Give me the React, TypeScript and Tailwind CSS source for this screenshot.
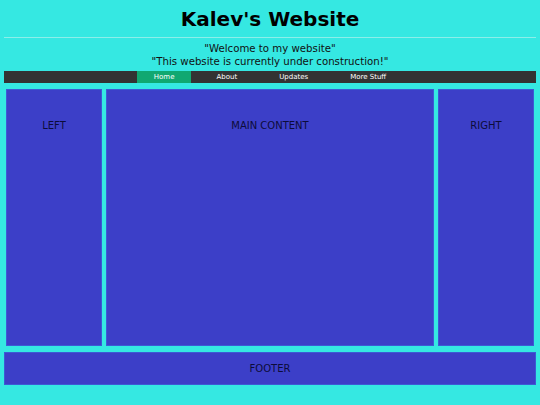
import React from 'react';

const navItems = ['Home', 'About', 'Updates', 'More Stuff'];

const App = () => {
  return (
    <div
      className="min-h-screen w-full bg-[#35e8e2] px-[4px] text-black"
      style={{ fontFamily: '"DejaVu Sans", Verdana, sans-serif' }}
    >
      <h1 className="pt-[8px] text-center text-[20px] font-bold leading-[23px]">Kalev's Website</h1>
      <hr className="mt-[6px] border-t border-[#8ceee9]" />

      <div className="mt-[4px] text-center text-[10.2px] leading-[13px] text-[#111]">
        <p>"Welcome to my website"</p>
        <p>"This website is currently under construction!"</p>
      </div>

      <nav className="mt-[3px] flex h-[12px] justify-center gap-[8px] bg-[#333333] text-[7px] leading-[12px] text-white">
        {navItems.map((item, i) => (
          <a key={item} className={`px-[17px] ${i === 0 ? 'bg-[#10a871]' : ''}`}>
            {item}
          </a>
        ))}
      </nav>

      <div className="mt-[6px] flex h-[257px] gap-[4px] px-[2px] text-[10px]">
        <div className="w-[96px] border border-[#3d5ad4] bg-[#3c3fc8] pt-[28px] text-center text-[#0c0c3a]">LEFT</div>
        <div className="flex-1 border border-[#3d5ad4] bg-[#3c3fc8] pt-[28px] text-center text-[#0c0c3a]">MAIN CONTENT</div>
        <div className="w-[96px] border border-[#3d5ad4] bg-[#3c3fc8] pt-[28px] text-center text-[#0c0c3a]">RIGHT</div>
      </div>

      <footer className="mt-[6px] flex h-[33px] items-center justify-center border border-[#3d5ad4] bg-[#3c3fc8] text-[10px] text-[#0c0c3a]">
        FOOTER
      </footer>
    </div>
  );
};

export default App;
